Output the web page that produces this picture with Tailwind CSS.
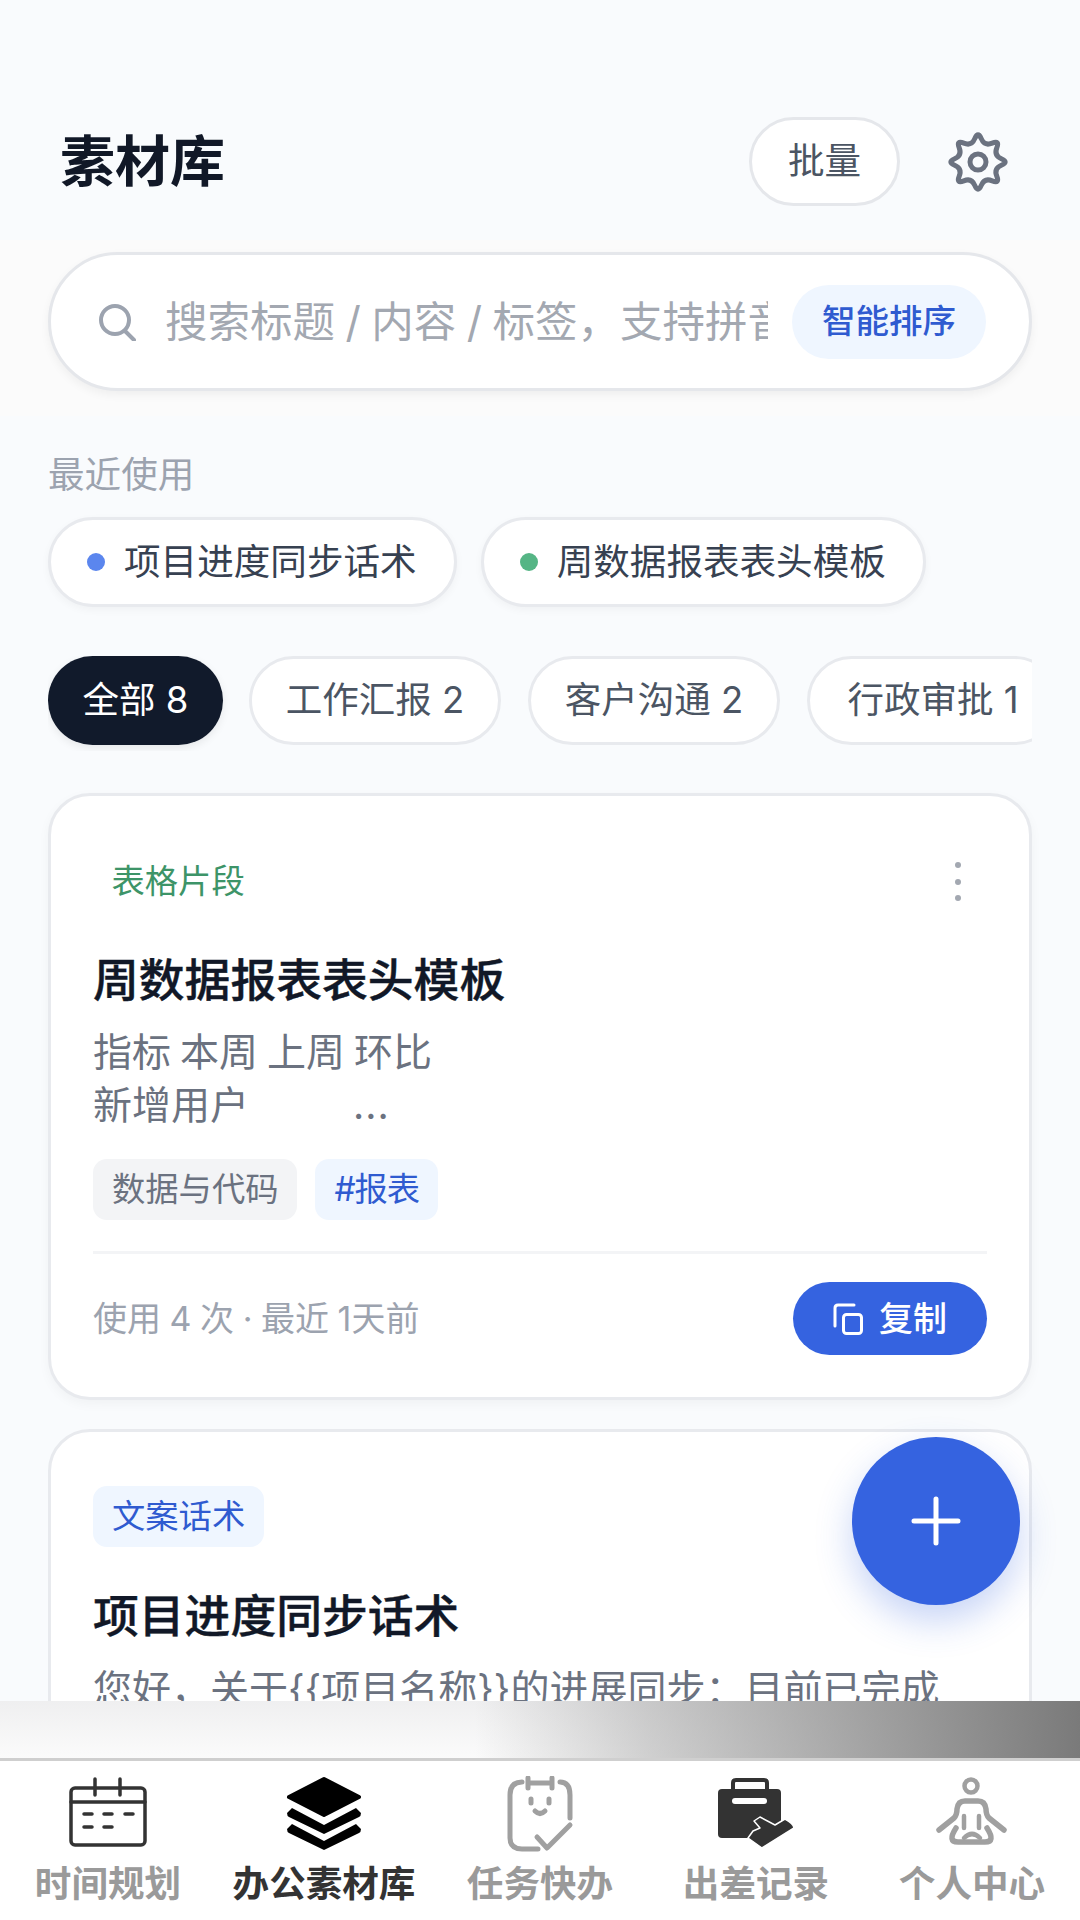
<!DOCTYPE html>
<html lang="zh-CN">

<head>
    <meta charset="UTF-8">
    <meta name="viewport" content="width=device-width, initial-scale=1.0">
    <title>素材库</title>
    <script src="https://cdn.jsdelivr.net/npm/@tailwindcss/browser@4"></script>
</head>

<body class="bg-[#f9fbfd] font-[Inter,'Noto_Sans_CJK_SC',sans-serif]">
    <div class="relative flex h-[1920px] w-[1080px] flex-col overflow-hidden">
        <main class="h-[1701px] shrink-0 overflow-hidden">
            <!-- Header -->
            <header class="flex h-[240px] items-start justify-between pl-[60px] pr-[72px] pt-[117px]">
                <h1 class="text-[55px] font-bold leading-[89px] text-[#111827]">素材库</h1>
                <div class="flex items-center gap-[48px]">
                    <button class="h-[89px] w-[151px] rounded-full border-[3px] border-[#e5e7eb] bg-white text-[36.6px] text-[#4b5563]">批量</button>
                    <svg class="h-[60px] w-[60px]" viewBox="0 0 60 60" fill="none" stroke="#6b7280" stroke-width="5">
                        <path d="M53.36 26.75Q61 30 53.36 33.26Q45.71 36.51 48.82 44.22Q51.92 51.92 44.22 48.82Q36.51 45.71 33.26 53.36Q30 61 26.75 53.36Q23.49 45.71 15.79 48.82Q8.08 51.92 11.19 44.22Q14.29 36.51 6.64 33.26Q-1 30 6.64 26.75Q14.29 23.49 11.19 15.79Q8.08 8.08 15.79 11.19Q23.49 14.29 26.75 6.64Q30 -1 33.26 6.64Q36.51 14.29 44.22 11.19Q51.92 8.08 48.82 15.79Q45.71 23.49 53.36 26.75Z" />
                        <circle cx="30" cy="30" r="8" />
                    </svg>
                </div>
            </header>

            <!-- Search -->
            <section class="h-[176px] bg-[#fbfbfb] px-[48px] pt-[12px]">
                <div class="flex h-[139px] items-center rounded-full border-[3px] border-[#e5e7eb] bg-white pl-[47px] pr-[43px] shadow-[0_4px_10px_rgba(0,0,0,0.05)]">
                    <svg class="h-[38px] w-[38px] shrink-0" viewBox="0 0 38 38" fill="none" stroke="#9ca3af" stroke-width="4" stroke-linecap="round">
                        <circle cx="17" cy="17" r="14" />
                        <path d="M27 28L36 37" />
                    </svg>
                    <div class="ml-[29px] min-w-0 flex-1 overflow-hidden whitespace-nowrap text-[42.5px] leading-[60px] text-[#a3a8b1] [word-spacing:-1.5px]">搜索标题 / 内容 / 标签，支持拼音</div>
                    <button class="ml-[24px] h-[74px] w-[194px] shrink-0 rounded-full bg-[#eff6ff] text-[33.5px] font-medium text-[#2f5bd0]">智能排序</button>
                </div>
            </section>

            <div class="px-[48px] pt-[34px]">
                <!-- Recent -->
                <p class="text-[36.6px] leading-[50px] text-[#9ca3af]">最近使用</p>
                <div class="mt-[17px] flex gap-[24px]">
                    <div class="flex h-[90px] items-center gap-[19px] rounded-full border-[3px] border-[#e8eaee] bg-white pl-[36px] pr-[37px] shadow-[0_3px_8px_rgba(0,0,0,0.04)]">
                        <span class="h-[18px] w-[18px] rounded-full bg-[#5b86ee]"></span>
                        <span class="text-[36.6px] text-[#374151]">项目进度同步话术</span>
                    </div>
                    <div class="flex h-[90px] items-center gap-[19px] rounded-full border-[3px] border-[#e8eaee] bg-white pl-[36px] pr-[37px] shadow-[0_3px_8px_rgba(0,0,0,0.04)]">
                        <span class="h-[18px] w-[18px] rounded-full bg-[#55b585]"></span>
                        <span class="text-[36.6px] text-[#374151]">周数据报表表头模板</span>
                    </div>
                </div>

                <!-- Filters -->
                <div class="mt-[49px] flex w-[984px] gap-[27px] overflow-hidden pb-[6px]">
                    <button class="-mr-[1px] h-[89px] w-[175px] shrink-0 rounded-full bg-[#111a2b] text-[36.5px] text-white shadow-[0_3px_8px_rgba(0,0,0,0.08)]">全部 8</button>
                    <button class="h-[89px] w-[252px] shrink-0 rounded-full border-[3px] border-[#e8eaee] bg-white text-[36.5px] text-[#4b5563]">工作汇报 2</button>
                    <button class="h-[89px] w-[252px] shrink-0 rounded-full border-[3px] border-[#e8eaee] bg-white text-[36.5px] text-[#4b5563]">客户沟通 2</button>
                    <button class="h-[89px] w-[252px] shrink-0 rounded-full border-[3px] border-[#e8eaee] bg-white text-[36.5px] text-[#4b5563]">行政审批 1</button>
                </div>

                <!-- Card 1 -->
                <article class="mt-[42px] rounded-[42px] border-[3px] border-[#e8eaee] bg-white px-[42px] pb-[42px] pt-[55px] shadow-[0_4px_12px_rgba(0,0,0,0.04)]">
                    <div class="flex items-center justify-between">
                        <span class="rounded-[14px] bg-white px-[18.5px] text-[33.3px] leading-[61px] text-[#3d9468]">表格片段</span>
                        <svg class="mr-[25px] h-[44px] w-[8px]" viewBox="0 0 8 44" fill="#a3a8b1">
                            <circle cx="4" cy="5" r="3" />
                            <circle cx="4" cy="22" r="3" />
                            <circle cx="4" cy="38" r="3" />
                        </svg>
                    </div>
                    <h2 class="mt-[38px] text-[45.8px] font-medium leading-[62px] text-[#111827] [-webkit-text-stroke:0.4px_#111827]">周数据报表表头模板</h2>
                    <p class="mt-[13px] text-[39px] leading-[53px] text-[#6b7280] [word-spacing:-2px]">指标 本周 上周 环比<br>新增用户<span class="ml-[104px] tracking-[1px]">...</span></p>
                    <div class="mt-[28px] flex gap-[18px]">
                        <span class="rounded-[14px] bg-[#f3f4f6] px-[19px] text-[33.3px] leading-[61px] text-[#6b7280]">数据与代码</span>
                        <span class="rounded-[14px] bg-[#eff6ff] px-[19px] text-[33.3px] leading-[61px] tracking-[-1px] text-[#2f5bd0]">#报表</span>
                    </div>
                    <div class="mt-[31px] h-[3px] bg-[#f3f4f6]"></div>
                    <div class="mt-[28px] flex items-center justify-between">
                        <span class="text-[34px] text-[#9ca3af] [word-spacing:-1px]">使用 4 次 · 最近 1天前</span>
                        <button class="flex h-[73px] w-[194px] items-center justify-center gap-[16px] rounded-full bg-[#3563e0] text-[34px] font-medium text-white">
                            <svg class="h-[32px] w-[30px]" viewBox="0 0 30 32" fill="none" stroke="#fff" stroke-width="3" stroke-linecap="round">
                                <rect x="10.5" y="11.5" width="18" height="19" rx="3" />
                                <path d="M2 23V5Q2 2 5 2H21" />
                            </svg>
                            复制
                        </button>
                    </div>
                </article>

                <!-- Card 2 -->
                <article class="mt-[29px] rounded-[42px] border-[3px] border-[#e8eaee] bg-white px-[42px] pb-[40px] pt-[54px]">
                    <span class="inline-block rounded-[14px] bg-[#eff6ff] px-[19px] align-top text-[33.3px] leading-[61px] text-[#2f5bd0]">文案话术</span>
                    <h2 class="mt-[39px] text-[45.8px] font-medium leading-[62px] text-[#111827] [-webkit-text-stroke:0.4px_#111827]">项目进度同步话术</h2>
                    <p class="mt-[14px] whitespace-nowrap text-[39px] leading-[53px] text-[#6b7280]">您好，关于{{项目名称}}的进展同步：目前已完成</p>
                </article>
            </div>
        </main>

        <!-- Floating add button -->
        <button class="absolute left-[852px] top-[1437px] flex h-[168px] w-[168px] items-center justify-center rounded-full bg-[#3563e0] shadow-[0_16px_36px_rgba(53,99,224,0.28)]">
            <svg class="h-[50px] w-[50px]" viewBox="0 0 50 50" stroke="#fff" stroke-width="5" stroke-linecap="round">
                <path d="M25 3V47M3 25H47" />
            </svg>
        </button>

        <!-- Strip above the tab bar -->
        <div class="h-[57px] shrink-0 bg-[linear-gradient(90deg,rgba(128,128,128,0)_44%,rgba(128,128,128,0.35)_60%,rgba(128,128,128,0.7)_80%,rgba(122,122,122,1)_100%),linear-gradient(180deg,#efeff0,#fbfbfb)]"></div>
        <div class="h-[3px] shrink-0 bg-[#cfcfcf]"></div>

        <!-- Tab bar -->
        <nav class="grid flex-1 grid-cols-5 bg-white pt-[15px]">
            <a class="flex flex-col items-center text-[36.6px] font-bold leading-[50px] text-[#9a9a9a]">
                <svg class="h-[76px] w-[100px]" viewBox="0 0 100 76" fill="none" stroke="#333" stroke-width="3.5" stroke-linecap="round">
                    <rect x="13" y="12" width="74" height="57" rx="4" />
                    <path d="M37 3V19M62 3V19M13 26H87" />
                    <path d="M26 38H34M46 38H54M67 38H75M26 51H34M46 51H54" />
                </svg>
                <span class="mt-[7px]">时间规划</span>
            </a>
            <a class="flex flex-col items-center text-[36.6px] font-bold leading-[50px] text-[#333]">
                <svg class="h-[76px] w-[100px]" viewBox="0 0 100 76" fill="#000">
                    <path d="M50 3L85 21L50 39L15 21Z" stroke="#000" stroke-width="4" stroke-linejoin="round" />
                    <path d="M18 32L50 49L82 32L87 37Q87 40 85 41L50 58L15 41Q13 40 13 37Z" />
                    <path d="M18 48L50 65L82 48L87 53Q87 56 85 57L50 74L15 57Q13 56 13 53Z" />
                </svg>
                <span class="mt-[7px]">办公素材库</span>
            </a>
            <a class="flex flex-col items-center text-[36.6px] font-bold leading-[50px] text-[#9a9a9a]">
                <svg class="h-[76px] w-[100px]" viewBox="0 0 100 76" fill="none" stroke="#a0a0a0" stroke-width="5" stroke-linecap="round" stroke-linejoin="round">
                    <path d="M38 7H62M38 2V12M62 2V12" />
                    <path d="M32 6Q20 6 20 19V62Q20 73 32 73H48" />
                    <path d="M70 6Q80 6 80 19V42" />
                    <path d="M41 23V27M59 23V27" />
                    <path d="M45 35Q50 40 55 35" />
                    <path d="M47 61L57 72L80 49" />
                </svg>
                <span class="mt-[7px]">任务快办</span>
            </a>
            <a class="flex flex-col items-center text-[36.6px] font-bold leading-[50px] text-[#9a9a9a]">
                <svg class="h-[76px] w-[100px]" viewBox="0 0 100 76" fill="#333">
                    <path d="M27 14V7Q27 4 30 4H58Q61 4 61 7V14" fill="none" stroke="#333" stroke-width="4" />
                    <rect x="12" y="13" width="63" height="49" rx="4" />
                    <rect x="26" y="22" width="35" height="6" rx="3" fill="#fff" />
                    <path d="M48 45L54 41L69 49L79 43Q88 48 88 52L56 72L42 62L47 55L54 52Z" stroke="#fff" stroke-width="1.5" stroke-linejoin="round" />
                </svg>
                <span class="mt-[7px]">出差记录</span>
            </a>
            <a class="flex flex-col items-center text-[36.6px] font-bold leading-[50px] text-[#9a9a9a]">
                <svg class="h-[76px] w-[100px]" viewBox="0 0 100 76" fill="none" stroke="#a0a0a0" stroke-width="5.5" stroke-linecap="round" stroke-linejoin="round">
                    <circle cx="49" cy="10" r="6.5" stroke-width="4.5" />
                    <path d="M17 54L32 42Q35 39 35 33Q36 25 43 25H56Q63 25 64 33Q64 39 67 42L82 54" />
                    <path d="M42 40V52M57 40V52" stroke-width="4.5" />
                    <path d="M34 52Q25 66 36 66H63Q74 66 65 52" />
                    <path d="M42 62Q50 54 58 62" stroke-width="4.5" />
                </svg>
                <span class="mt-[7px]">个人中心</span>
            </a>
        </nav>
    </div>
</body>

</html>
